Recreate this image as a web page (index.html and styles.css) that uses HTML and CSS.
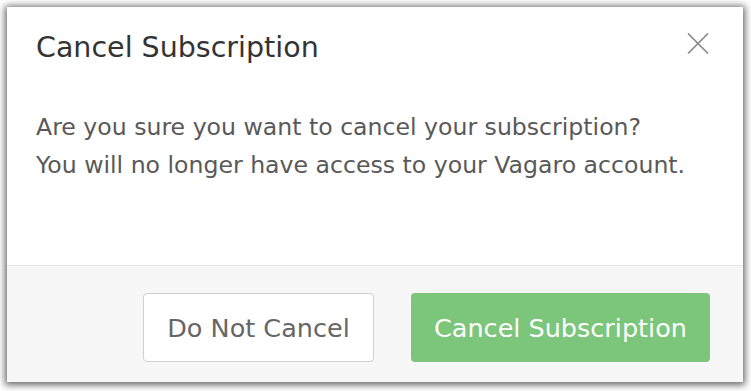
FILE: index.html
```html
<!DOCTYPE html>
<html lang="en">
<head>
<meta charset="utf-8">
<title>Cancel Subscription</title>
<link rel="stylesheet" href="styles.css">
</head>
<body>
<div class="modal">
  <div class="modal-header">
    <h1 class="modal-title">Cancel Subscription</h1>
    <button class="close" aria-label="Close">
      <svg width="22" height="21" viewBox="0 0 22 21"><path d="M1 0.5L21 20.5M21 0.5L1 20.5" stroke="#8c8c8c" stroke-width="1.7" fill="none"/></svg>
    </button>
  </div>
  <div class="modal-body">
    <p>Are you sure you want to cancel your subscription?</p>
    <p>You will no longer have access to your Vagaro account.</p>
  </div>
  <div class="modal-footer">
    <button class="btn btn-secondary">Do Not Cancel</button>
    <button class="btn btn-primary">Cancel Subscription</button>
  </div>
</div>
</body>
</html>
```
FILE: styles.css
```css
html, body {
  margin: 0;
  padding: 0;
  background: #ffffff;
}
body {
  padding: 7px 8px 9px 7px;
  font-family: "DejaVu Sans", "Liberation Sans", sans-serif;
}
.modal {
  width: 736px;
  height: 375px;
  background: #fff;
  box-shadow: 0 1px 7px 2px rgba(0, 0, 0, 0.6);
  display: flex;
  flex-direction: column;
  box-sizing: border-box;
}
.modal-header {
  display: flex;
  justify-content: space-between;
  align-items: flex-start;
  padding: 25px 34px 0 29px;
  height: 101px;
  box-sizing: border-box;
}
.modal-title {
  margin: 0;
  font-size: 28.5px;
  font-weight: normal;
  color: #333;
  line-height: 32px;
}
.close {
  border: 0;
  background: none;
  padding: 0;
  margin-top: 1px;
  cursor: pointer;
  line-height: 0;
}
.modal-body {
  padding: 0 29px;
  flex: 1;
  color: #595959;
  font-size: 23.6px;
  line-height: 38px;
}
.modal-body p {
  margin: 0;
  white-space: nowrap;
}
.modal-footer {
  border-top: 1px solid #e5e5e5;
  background: #f7f7f7;
  height: 117px;
  box-sizing: border-box;
  display: flex;
  justify-content: flex-end;
  align-items: flex-start;
  gap: 37px;
  padding: 27px 33px 0 0;
}
.btn {
  height: 69px;
  border-radius: 4px;
  font-family: "DejaVu Sans", "Liberation Sans", sans-serif;
  font-size: 25.5px;
  cursor: pointer;
  padding: 0;
}
.btn-secondary {
  width: 231px;
  background: #fff;
  border: 1.5px solid #cfcfcf;
  color: #666;
}
.btn-primary {
  width: 299px;
  background: #7bc67a;
  border: 0;
  color: #fff;
}
```
